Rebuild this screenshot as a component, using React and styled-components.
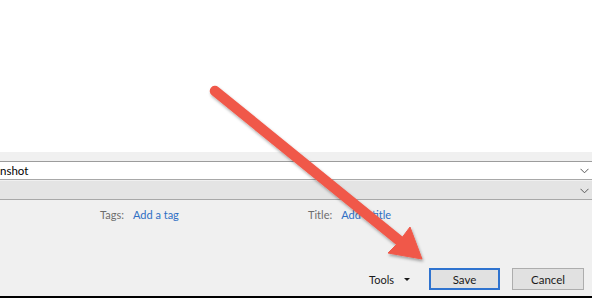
import React from "react";
import styled, { createGlobalStyle } from "styled-components";

const Global = createGlobalStyle`
  html, body { margin: 0; padding: 0; background: #fff; }
  body { font-family: Lato, "Noto Sans", "Segoe UI", sans-serif; overflow: hidden; }
`;

const Page = styled.div`
  position: relative;
  width: 592px;
  height: 298px;
  display: flex;
  flex-direction: column;
  overflow: hidden;
`;

const Blank = styled.div`
  height: 152px;
  background: #ffffff;
  flex: none;
`;

const Panel = styled.div`
  flex: 1;
  background: #f0f0f0;
  border-bottom: 2px solid #000;
  display: flex;
  flex-direction: column;
  padding-top: 9px;
  font-size: 11px;
`;

const Field = styled.div`
  height: 17px;
  display: flex;
  align-items: center;
  justify-content: space-between;
  background: ${(p) => (p.$shaded ? "#e4e4e4" : "#ffffff")};
  border-top: 1px solid ${(p) => (p.$shaded ? "#e4e4e4" : "#9c9c9c")};
  border-bottom: 1px solid #a8a8a8;
  margin-top: ${(p) => (p.$shaded ? "1px" : "0")};
  color: #000;
  padding-right: 3px;
  font-size: 11.5px;
`;

const FieldText = styled.span`
  line-height: 17px;
`;

const Chevron = () => (
  <svg width="9" height="6" viewBox="0 0 9 6">
    <path d="M0.5 0.8 L4.5 4.8 L8.5 0.8" fill="none" stroke="#5a5a5a" strokeWidth="1" />
  </svg>
);

const MetaRow = styled.div`
  display: grid;
  grid-template-columns: 208px auto;
  padding-left: 100px;
  margin-top: 6px;
  height: 16px;
  align-items: center;
`;

const Meta = styled.div`
  display: flex;
  gap: 9px;
  align-items: center;
`;

const Label = styled.span`
  color: #6d6d6d;
`;

const Link = styled.span`
  color: #2f6fc4;
`;

const Spacer = styled.div`
  flex: 1;
`;

const ButtonRow = styled.div`
  display: flex;
  justify-content: flex-end;
  align-items: center;
  padding-right: 8px;
  margin-bottom: 6px;
  gap: 12px;
`;

const Tools = styled.div`
  display: flex;
  align-items: center;
  gap: 10px;
  margin-right: 7px;
  color: #1a1a1a;
`;

const Caret = styled.span`
  width: 0;
  height: 0;
  border-left: 3px solid transparent;
  border-right: 3px solid transparent;
  border-top: 3px solid #1a1a1a;
  margin-top: 1px;
`;

const Button = styled.button`
  width: ${(p) => (p.$w || 72)}px;
  height: 22px;
  box-sizing: border-box;
  background: #e1e1e1;
  border: 1px solid ${(p) => (p.$primary ? "#2f73cf" : "#adadad")};
  box-shadow: ${(p) => (p.$primary ? "inset 0 0 0 1px #2f73cf" : "none")};
  font-family: inherit;
  font-size: 11.5px;
  color: #1a1a1a;
  padding: 0;
`;

const Overlay = styled.svg`
  position: absolute;
  left: 0;
  top: 0;
  pointer-events: none;
`;

export default function App() {
  return (
    <>
      <Global />
      <Page>
        <Blank />
        <Panel>
          <Field>
            <FieldText>nshot</FieldText>
            <Chevron />
          </Field>
          <Field $shaded>
            <span />
            <Chevron />
          </Field>
          <MetaRow>
            <Meta>
              <Label>Tags:</Label>
              <Link>Add a tag</Link>
            </Meta>
            <Meta>
              <Label>Title:</Label>
              <Link>Add a title</Link>
            </Meta>
          </MetaRow>
          <Spacer />
          <ButtonRow>
            <Tools>
              <span>Tools</span>
              <Caret />
            </Tools>
            <Button $primary $w={71}>Save</Button>
            <Button>Cancel</Button>
          </ButtonRow>
        </Panel>
        <Overlay width="592" height="298" viewBox="0 0 592 298">
          <defs>
            <filter id="sh" x="-10%" y="-10%" width="130%" height="130%">
              <feDropShadow dx="1" dy="2" stdDeviation="1.6" floodColor="#000" floodOpacity="0.35" />
            </filter>
          </defs>
          <g filter="url(#sh)" fill="#f0594a" stroke="#f0594a">
            <line x1="215" y1="91" x2="401" y2="242" strokeWidth="10.5" strokeLinecap="round" />
            <polygon points="410,227 422,259 388,253 398,243" strokeWidth="1" strokeLinejoin="round" />
          </g>
        </Overlay>
      </Page>
    </>
  );
}
